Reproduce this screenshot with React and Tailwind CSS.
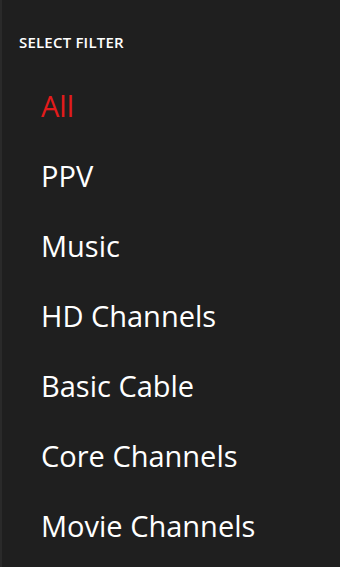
export default function App() {
  const items = ["All", "PPV", "Music", "HD Channels", "Basic Cable", "Core Channels", "Movie Channels"];
  return (
    <div className="w-[340px] h-[567px] overflow-hidden bg-[#1f1f1f] border-l-2 border-[#2a2a2a]" style={{ fontFamily: '"Open Sans", "Noto Sans", sans-serif' }}>
      <div className="pt-[32px] pl-[17px] text-[15px] font-semibold text-white leading-[21px] tracking-[0.2px]">SELECT FILTER</div>
      <ul className="pl-[39px] pt-[33px]">
        {items.map((t, i) => (
          <li key={t} className={`h-[70px] text-[29px] leading-[40px] ${i === 0 ? "text-[#e31b1b]" : "text-white"}`}>{t}</li>
        ))}
      </ul>
    </div>
  );
}
